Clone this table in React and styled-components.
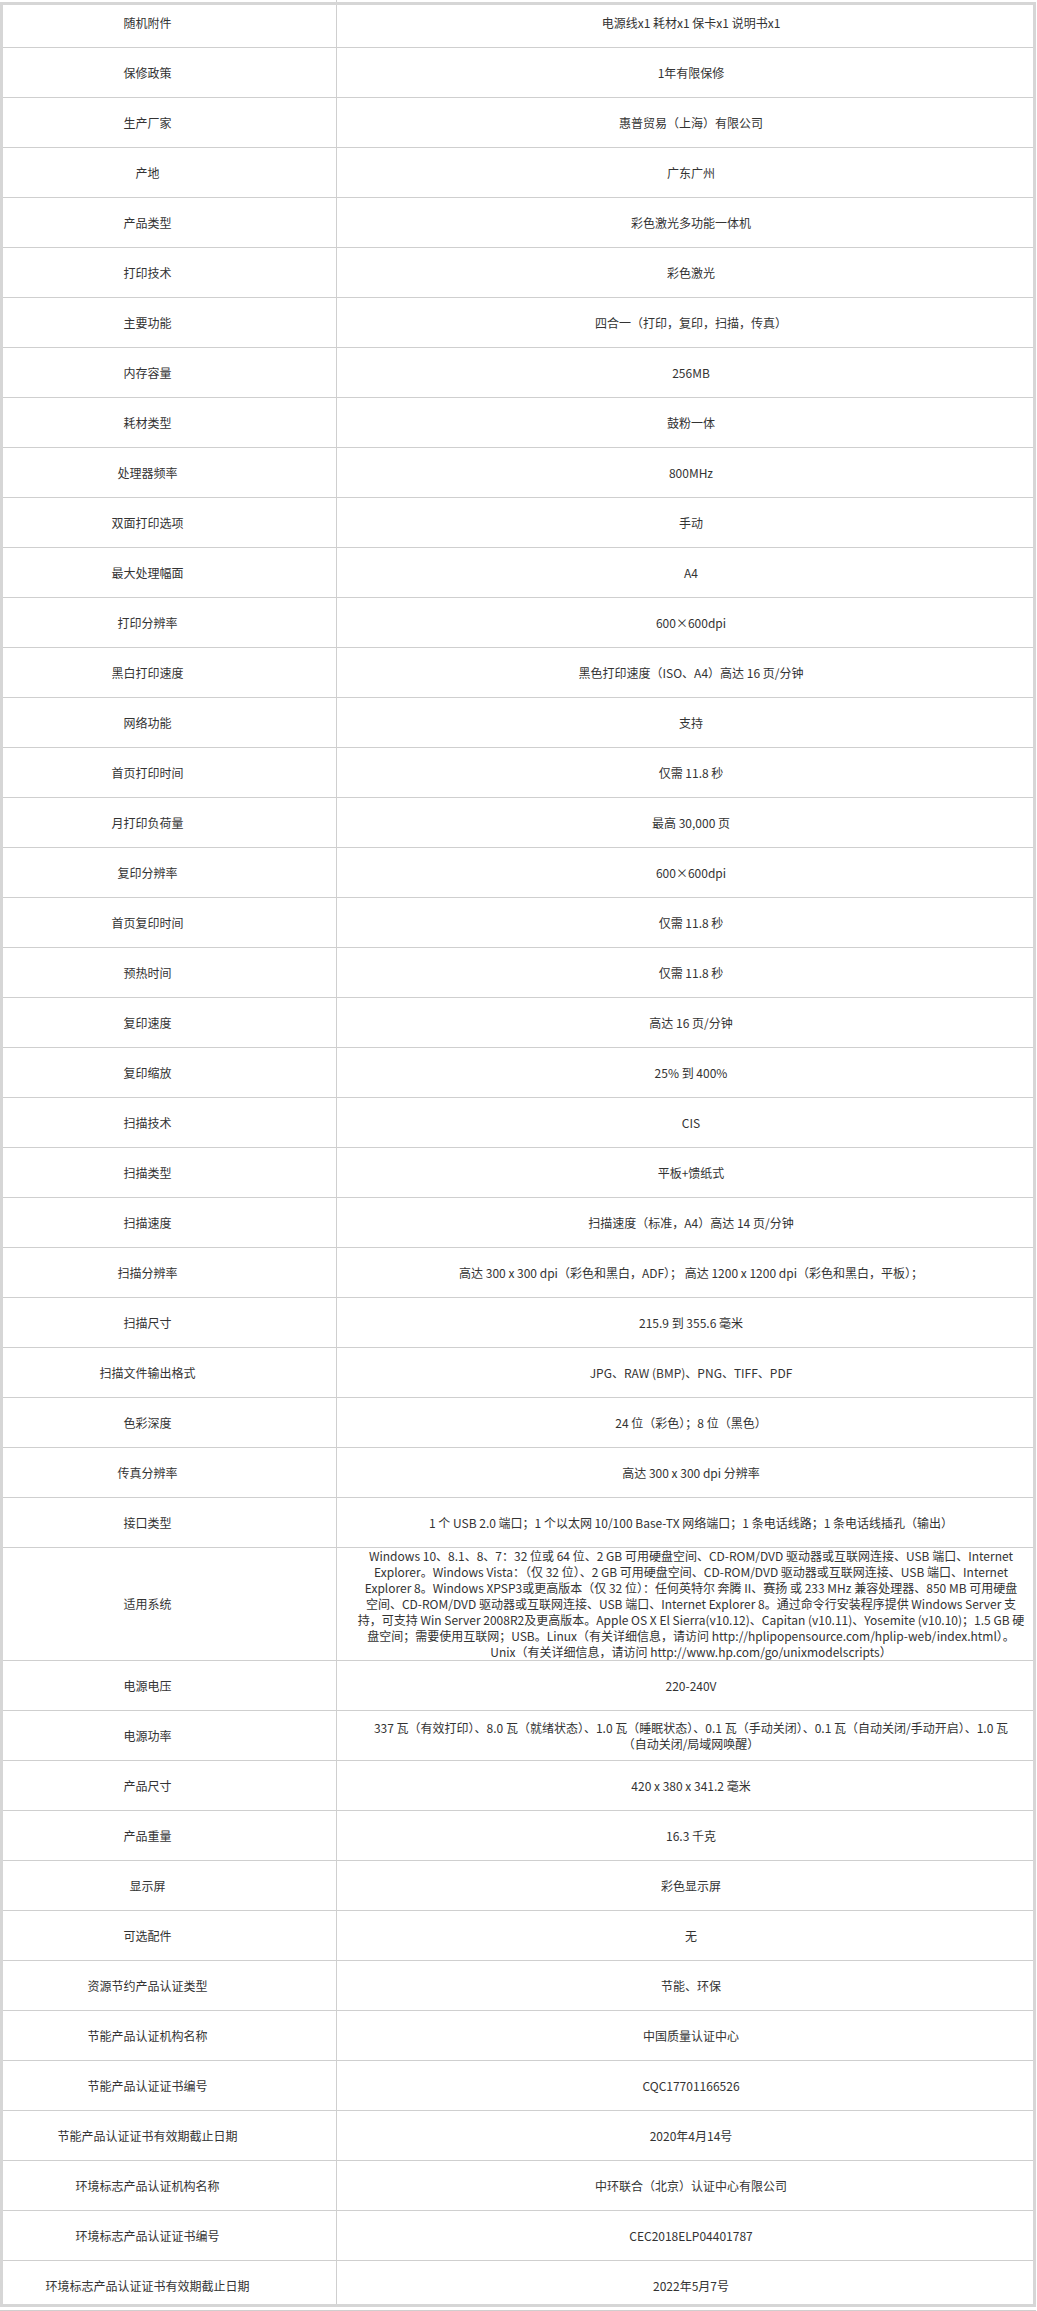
import styled, { createGlobalStyle } from "styled-components";

const GlobalStyle = createGlobalStyle`
  html, body {
    margin: 0;
    padding: 0;
    background: #fff;
  }
  body {
    font-family: "Microsoft YaHei", "Noto Sans CJK SC", "Noto Sans", sans-serif;
    font-size: 12px;
    color: #333;
  }
`;

// long values keep the line breaks of the source page
const specs = [
  ["随机附件", "电源线x1 耗材x1 保卡x1 说明书x1"],
  ["保修政策", "1年有限保修"],
  ["生产厂家", "惠普贸易（上海）有限公司"],
  ["产地", "广东广州"],
  ["产品类型", "彩色激光多功能一体机"],
  ["打印技术", "彩色激光"],
  ["主要功能", "四合一（打印，复印，扫描，传真）"],
  ["内存容量", "256MB"],
  ["耗材类型", "鼓粉一体"],
  ["处理器频率", "800MHz"],
  ["双面打印选项", "手动"],
  ["最大处理幅面", "A4"],
  ["打印分辨率", "600×600dpi"],
  ["黑白打印速度", "黑色打印速度（ISO、A4）高达 16 页/分钟"],
  ["网络功能", "支持"],
  ["首页打印时间", "仅需 11.8 秒"],
  ["月打印负荷量", "最高 30,000 页"],
  ["复印分辨率", "600×600dpi"],
  ["首页复印时间", "仅需 11.8 秒"],
  ["预热时间", "仅需 11.8 秒"],
  ["复印速度", "高达 16 页/分钟"],
  ["复印缩放", "25% 到 400%"],
  ["扫描技术", "CIS"],
  ["扫描类型", "平板+馈纸式"],
  ["扫描速度", "扫描速度（标准，A4）高达 14 页/分钟"],
  ["扫描分辨率", "高达 300 x 300 dpi（彩色和黑白，ADF）； 高达 1200 x 1200 dpi（彩色和黑白，平板）；"],
  ["扫描尺寸", "215.9 到 355.6 毫米"],
  ["扫描文件输出格式", "JPG、RAW (BMP)、PNG、TIFF、PDF"],
  ["色彩深度", "24 位（彩色）；8 位（黑色）"],
  ["传真分辨率", "高达 300 x 300 dpi 分辨率"],
  ["接口类型", "1 个 USB 2.0 端口；1 个以太网 10/100 Base-TX 网络端口；1 条电话线路；1 条电话线插孔（输出）"],
  [
    "适用系统",
    [
      "Windows 10、8.1、8、7：32 位或 64 位、2 GB 可用硬盘空间、CD-ROM/DVD 驱动器或互联网连接、USB 端口、Internet",
      "Explorer。Windows Vista：（仅 32 位）、2 GB 可用硬盘空间、CD-ROM/DVD 驱动器或互联网连接、USB 端口、Internet",
      "Explorer 8。Windows XPSP3或更高版本（仅 32 位）：任何英特尔 奔腾 II、赛扬 或 233 MHz 兼容处理器、850 MB 可用硬盘",
      "空间、CD-ROM/DVD 驱动器或互联网连接、USB 端口、Internet Explorer 8。通过命令行安装程序提供 Windows Server 支",
      "持，可支持 Win Server 2008R2及更高版本。Apple OS X El Sierra(v10.12)、Capitan (v10.11)、Yosemite (v10.10)；1.5 GB 硬",
      "盘空间；需要使用互联网；USB。Linux（有关详细信息，请访问 http://hplipopensource.com/hplip-web/index.html）。",
      "Unix（有关详细信息，请访问 http://www.hp.com/go/unixmodelscripts）",
    ],
  ],
  ["电源电压", "220-240V"],
  [
    "电源功率",
    [
      "337 瓦（有效打印）、8.0 瓦（就绪状态）、1.0 瓦（睡眠状态）、0.1 瓦（手动关闭）、0.1 瓦（自动关闭/手动开启）、1.0 瓦",
      "（自动关闭/局域网唤醒）",
    ],
  ],
  ["产品尺寸", "420 x 380 x 341.2 毫米"],
  ["产品重量", "16.3 千克"],
  ["显示屏", "彩色显示屏"],
  ["可选配件", "无"],
  ["资源节约产品认证类型", "节能、环保"],
  ["节能产品认证机构名称", "中国质量认证中心"],
  ["节能产品认证证书编号", "CQC17701166526"],
  ["节能产品认证证书有效期截止日期", "2020年4月14号"],
  ["环境标志产品认证机构名称", "中环联合（北京）认证中心有限公司"],
  ["环境标志产品认证证书编号", "CEC2018ELP04401787"],
  ["环境标志产品认证证书有效期截止日期", "2022年5月7号"],
];

const Page = styled.div`
  width: 1036px;
`;

const Stub = styled.div`
  display: flex;
  height: ${(p) => p.$h}px;
  border-top: ${(p) => (p.$top ? "1px solid #cfcfcf" : "none")};
  margin-top: ${(p) => (p.$top ? "3px" : "0")};
`;

const StubCell = styled.div`
  width: 336px;
  border-right: 1px solid #cfcfcf;
`;

const Frame = styled.div`
  border: 3px solid #d6d6d6;
  overflow: hidden;
`;

const Table = styled.table`
  width: 100%;
  border-collapse: collapse;
  table-layout: fixed;
  margin: -8px 0 -7px;
`;

const Row = styled.tr`
  height: 50px;
`;

const Label = styled.td`
  width: 289px;
  padding: 0 44px 0 0;
  border-top: 1px solid #cfcfcf;
  border-bottom: 1px solid #cfcfcf;
  border-right: 1px solid #cfcfcf;
  text-align: center;
  vertical-align: middle;
  line-height: 16px;
`;

const Value = styled.td`
  padding: 0 0 0 12px;
  border-top: 1px solid #cfcfcf;
  border-bottom: 1px solid #cfcfcf;
  text-align: center;
  vertical-align: middle;
  line-height: 16px;
`;

const Line = styled.span`
  display: block;
  white-space: nowrap;
`;

export default function App() {
  return (
    <Page>
      <GlobalStyle />
      <Stub $h={2}>
        <StubCell />
      </Stub>
      <Frame>
        <Table>
          <tbody>
            {specs.map(([name, value]) => (
              <Row key={name}>
                <Label>{name}</Label>
                <Value>
                  {Array.isArray(value)
                    ? value.map((line, i) => <Line key={i}>{line}</Line>)
                    : value}
                </Value>
              </Row>
            ))}
          </tbody>
        </Table>
      </Frame>
      <Stub $h={2} $top>
        <StubCell />
      </Stub>
    </Page>
  );
}
